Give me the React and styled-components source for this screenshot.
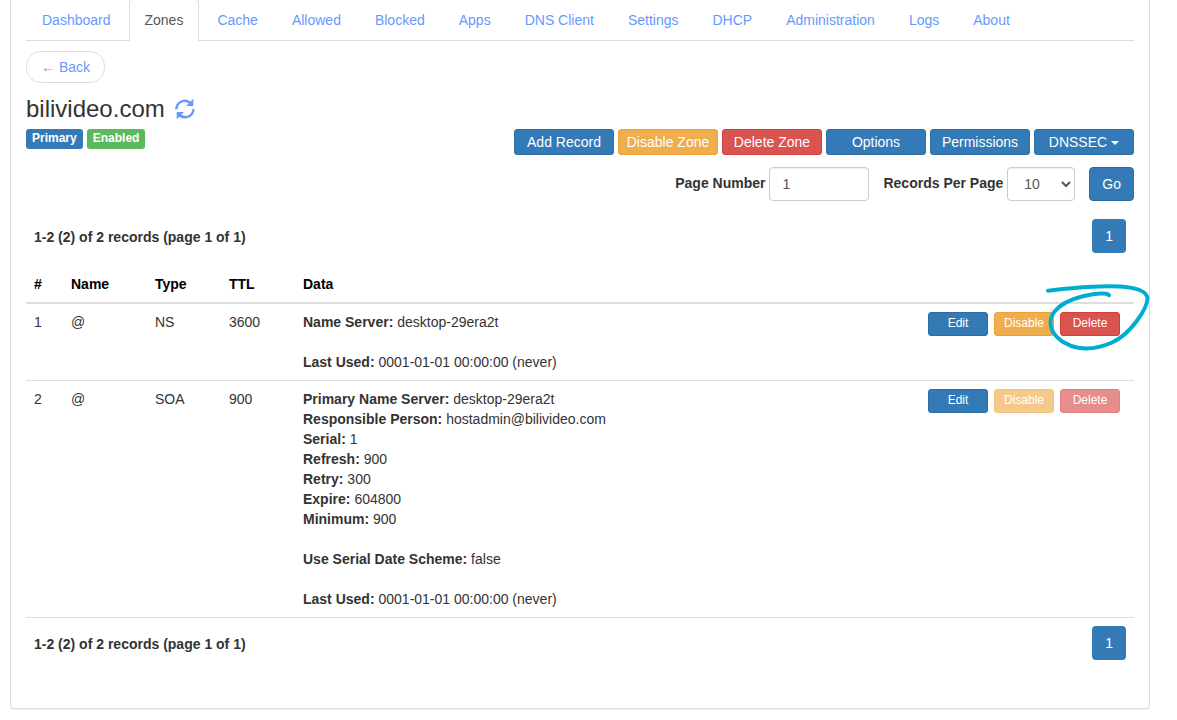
import React, { useState } from "react";
import styled, { createGlobalStyle } from "styled-components";

const GlobalStyle = createGlobalStyle`
  * {
    box-sizing: border-box;
  }
  body {
    margin: 0;
    background: #fff;
    color: #333;
    font-family: Arial, "Liberation Sans", sans-serif;
    font-size: 14px;
    line-height: 20px;
  }
  button, input, select {
    font-family: inherit;
    font-size: 14px;
    line-height: 20px;
  }
`;

const colors = {
  primary: { bg: "#337ab7", border: "#2e6da4" },
  success: { bg: "#5cb85c", border: "#4cae4c" },
  warning: { bg: "#f0ad4e", border: "#eea236" },
  danger: { bg: "#d9534f", border: "#d43f3a" },
};

const Page = styled.main`
  padding: 0 27px 11px 10px;
`;

const Panel = styled.section`
  border: 1px solid #ddd;
  border-top: 0;
  border-radius: 0 0 4px 4px;
  box-shadow: 0 1px 1px rgba(0, 0, 0, 0.05);
  padding: 0 15px 40px;
`;

const Tabs = styled.nav`
  display: flex;
  height: 41px;
  align-items: flex-end;
  gap: 2px;
  border-bottom: 1px solid #ddd;
`;

const Tab = styled.a`
  margin-bottom: -1px;
  padding: 10px 15px;
  border: 1px solid ${(props) => (props.$active ? "#ddd" : "transparent")};
  border-bottom-color: ${(props) => (props.$active ? "#fff" : "transparent")};
  border-radius: 4px 4px 0 0;
  background: ${(props) => (props.$active ? "#fff" : "transparent")};
  color: ${(props) => (props.$active ? "#555" : "#6699ff")};
  text-decoration: none;
  white-space: nowrap;
`;

const BackLink = styled.a`
  display: inline-block;
  margin-top: 10px;
  padding: 5px 14px;
  border: 1px solid #ddd;
  border-radius: 15px;
  color: #6699ff;
  text-decoration: none;
`;

const ZoneTitle = styled.div`
  display: flex;
  align-items: center;
  gap: 10px;
  margin: 13px 0 7px;
  h3 {
    margin: 0;
    font-size: 24px;
    font-weight: 400;
    line-height: 26px;
  }
`;

const RefreshButton = styled.button`
  display: flex;
  padding: 0;
  border: 0;
  background: none;
  color: #6699ff;
  cursor: pointer;
`;

const ZoneBar = styled.div`
  display: flex;
  justify-content: space-between;
  align-items: flex-start;
`;

const Group = styled.div`
  display: flex;
  gap: 4px;
`;

const Label = styled.span`
  padding: 2px 6px 4px;
  border-radius: 3px;
  background: ${(props) => colors[props.$kind].bg};
  color: #fff;
  font-size: 12px;
  font-weight: 700;
  line-height: 14px;
`;

const Button = styled.button`
  width: 100px;
  padding: 2px 0;
  border: 1px solid ${(props) => colors[props.$kind].border};
  border-radius: 3px;
  background: ${(props) => colors[props.$kind].bg};
  color: #fff;
  text-align: center;
  white-space: nowrap;
  cursor: pointer;
  &:disabled {
    opacity: 0.65;
    cursor: not-allowed;
  }
`;

const SmallButton = styled(Button)`
  width: 60px;
  height: 24px;
  padding: 1px 0 3px;
  font-size: 12px;
  line-height: 18px;
`;

const GoButton = styled(Button)`
  width: auto;
  padding: 6px 12px;
  border-radius: 4px;
`;

const Caret = styled.span`
  display: inline-block;
  margin-left: 4px;
  vertical-align: middle;
  border-top: 4px solid #fff;
  border-right: 4px solid transparent;
  border-left: 4px solid transparent;
`;

const PageForm = styled.form`
  display: flex;
  justify-content: flex-end;
  gap: 14px;
  margin: 12px 0 10px;
`;

const Field = styled.div`
  display: flex;
  align-items: center;
  gap: 4px;
  label {
    padding-bottom: 2px;
    font-weight: 700;
  }
  input,
  select {
    height: 34px;
    padding: 6px 12px;
    border: 1px solid #ccc;
    border-radius: 4px;
    background: #fff;
    color: #555;
    box-shadow: inset 0 1px 1px rgba(0, 0, 0, 0.075);
  }
  input {
    width: 100px;
  }
  select {
    width: 68px;
  }
`;

const PageBar = styled.div`
  display: flex;
  justify-content: space-between;
  align-items: flex-start;
  padding: 8px;
  font-weight: 700;
  span {
    padding-top: 8px;
  }
`;

const PageLink = styled.a`
  padding: 7px 13px;
  border-radius: 4px;
  background: #337ab7;
  color: #fff;
  font-weight: 400;
  text-decoration: none;
`;

const RecordTable = styled.table`
  width: 100%;
  margin-top: 5px;
  border-collapse: separate;
  border-spacing: 0;
  table-layout: fixed;
  border-bottom: 1px solid #ddd;
  th,
  td {
    padding: 8px;
    text-align: left;
    vertical-align: top;
  }
  th {
    border-bottom: 2px solid #ddd;
    color: #000;
  }
  tr + tr td {
    border-top: 1px solid #ddd;
  }
`;

const Column = styled.col`
  width: ${(props) => (props.$width ? `${props.$width}px` : "auto")};
`;

const DataGroup = styled.div`
  & + & {
    margin-top: 20px;
  }
`;

const RowActions = styled.div`
  display: flex;
  justify-content: flex-end;
  gap: 6px;
  margin-right: 6px;
`;

const Marked = styled.div`
  position: relative;
  height: 24px;
`;

const Scribble = styled.svg`
  position: absolute;
  top: -32px;
  left: -16px;
  pointer-events: none;
`;

const tabs = [
  "Dashboard",
  "Zones",
  "Cache",
  "Allowed",
  "Blocked",
  "Apps",
  "DNS Client",
  "Settings",
  "DHCP",
  "Administration",
  "Logs",
  "About",
];

const records = [
  {
    id: 1,
    name: "@",
    type: "NS",
    ttl: 3600,
    marked: true,
    data: [
      [["Name Server", "desktop-29era2t"]],
      [["Last Used", "0001-01-01 00:00:00 (never)"]],
    ],
  },
  {
    id: 2,
    name: "@",
    type: "SOA",
    ttl: 900,
    locked: true,
    data: [
      [
        ["Primary Name Server", "desktop-29era2t"],
        ["Responsible Person", "hostadmin@bilivideo.com"],
        ["Serial", "1"],
        ["Refresh", "900"],
        ["Retry", "300"],
        ["Expire", "604800"],
        ["Minimum", "900"],
      ],
      [["Use Serial Date Scheme", "false"]],
      [["Last Used", "0001-01-01 00:00:00 (never)"]],
    ],
  },
];

const RefreshIcon = () => (
  <svg width="20" height="20" viewBox="0 0 1200 1200" aria-hidden="true">
    <path
      fill="currentColor"
      transform="matrix(1 0 0 -1 0 1200)"
      d="M947 1060l135 135q7 7 12.5 5t5.5 -13v-377q0 -10 -7 -17t-17 -7h-382q-11 0 -13 5.5t5 12.5l133 133q-109 76 -238 76q-116 0 -214.5 -57t-155.5 -155.5t-57 -214.5h-150q0 117 45.5 224t123 184.5t184.5 123t224 45.5q192 0 347 -117zM1027 600h150q0 -117 -45.5 -224t-123 -184.5t-184.5 -123t-224 -45.5q-192 0 -348 118l-134 -134q-7 -8 -12.5 -5.5t-5.5 12.5v377q0 10 7 17t17 7h382q11 0 13 -5.5t-5 -12.5l-133 -133q110 -76 240 -76q116 0 214.5 57t155.5 155.5t57 214.5z"
    />
  </svg>
);

const DeleteMark = () => (
  <Scribble width="108" height="72" viewBox="0 0 108 72" aria-hidden="true">
    <path
      fill="none"
      stroke="#00add0"
      strokeWidth="4"
      strokeLinecap="round"
      strokeLinejoin="round"
      d="M4 10.8C18 9 32 7.4 48 6.7C62 6.1 76 6 86 7.6C96 9.2 102.6 12 103.4 18C104 25 98 34 92 42C86 50 78 58 68 62.5C57 67.5 45 69.5 34 67.8C24 66.2 14 60 9 52C5 45 6 37 11 31C17 24 28 19 38 16.5C46 14.5 55 13 60 13.6C63 13.8 64.6 14.2 65 15.2"
    />
  </Scribble>
);

const Paging = () => (
  <PageBar>
    <span>1-2 (2) of 2 records (page 1 of 1)</span>
    <PageLink href="#page-1">1</PageLink>
  </PageBar>
);

const RecordRow = ({ record }) => (
  <tr>
    <td>{record.id}</td>
    <td>{record.name}</td>
    <td>{record.type}</td>
    <td>{record.ttl}</td>
    <td>
      {record.data.map((group) => (
        <DataGroup key={group[0][0]}>
          {group.map(([key, value]) => (
            <div key={key}>
              <b>{key}:</b> {value}
            </div>
          ))}
        </DataGroup>
      ))}
    </td>
    <td>
      <RowActions>
        <SmallButton $kind="primary">Edit</SmallButton>
        <SmallButton $kind="warning" disabled={record.locked}>
          Disable
        </SmallButton>
        <Marked>
          <SmallButton $kind="danger" disabled={record.locked}>
            Delete
          </SmallButton>
          {record.marked && <DeleteMark />}
        </Marked>
      </RowActions>
    </td>
  </tr>
);

export default function App() {
  const [pageNumber, setPageNumber] = useState("1");
  const [perPage, setPerPage] = useState("10");

  return (
    <>
      <GlobalStyle />
      <Page>
        <Panel>
          <Tabs>
            {tabs.map((tab) => (
              <Tab key={tab} href="#" $active={tab === "Zones"}>
                {tab}
              </Tab>
            ))}
          </Tabs>
          <BackLink href="#zones">← Back</BackLink>
          <ZoneTitle>
            <h3>bilivideo.com</h3>
            <RefreshButton type="button" aria-label="Refresh">
              <RefreshIcon />
            </RefreshButton>
          </ZoneTitle>
          <ZoneBar>
            <Group>
              <Label $kind="primary">Primary</Label>
              <Label $kind="success">Enabled</Label>
            </Group>
            <Group>
              <Button $kind="primary">Add Record</Button>
              <Button $kind="warning">Disable Zone</Button>
              <Button $kind="danger">Delete Zone</Button>
              <Button $kind="primary">Options</Button>
              <Button $kind="primary">Permissions</Button>
              <Button $kind="primary">
                DNSSEC
                <Caret />
              </Button>
            </Group>
          </ZoneBar>
          <PageForm onSubmit={(e) => e.preventDefault()}>
            <Field>
              <label htmlFor="pageNumber">Page Number</label>
              <input
                id="pageNumber"
                type="text"
                value={pageNumber}
                onChange={(e) => setPageNumber(e.target.value)}
              />
            </Field>
            <Field>
              <label htmlFor="perPage">Records Per Page</label>
              <select
                id="perPage"
                value={perPage}
                onChange={(e) => setPerPage(e.target.value)}
              >
                <option>10</option>
                <option>25</option>
                <option>50</option>
              </select>
            </Field>
            <GoButton $kind="primary" type="submit">
              Go
            </GoButton>
          </PageForm>
          <Paging />
          <RecordTable>
            <colgroup>
              <Column $width={37} />
              <Column $width={84} />
              <Column $width={74} />
              <Column $width={74} />
              <Column />
              <Column $width={220} />
            </colgroup>
            <thead>
              <tr>
                <th>#</th>
                <th>Name</th>
                <th>Type</th>
                <th>TTL</th>
                <th>Data</th>
                <th aria-label="Actions" />
              </tr>
            </thead>
            <tbody>
              {records.map((record) => (
                <RecordRow key={record.id} record={record} />
              ))}
            </tbody>
          </RecordTable>
          <Paging />
        </Panel>
      </Page>
    </>
  );
}
